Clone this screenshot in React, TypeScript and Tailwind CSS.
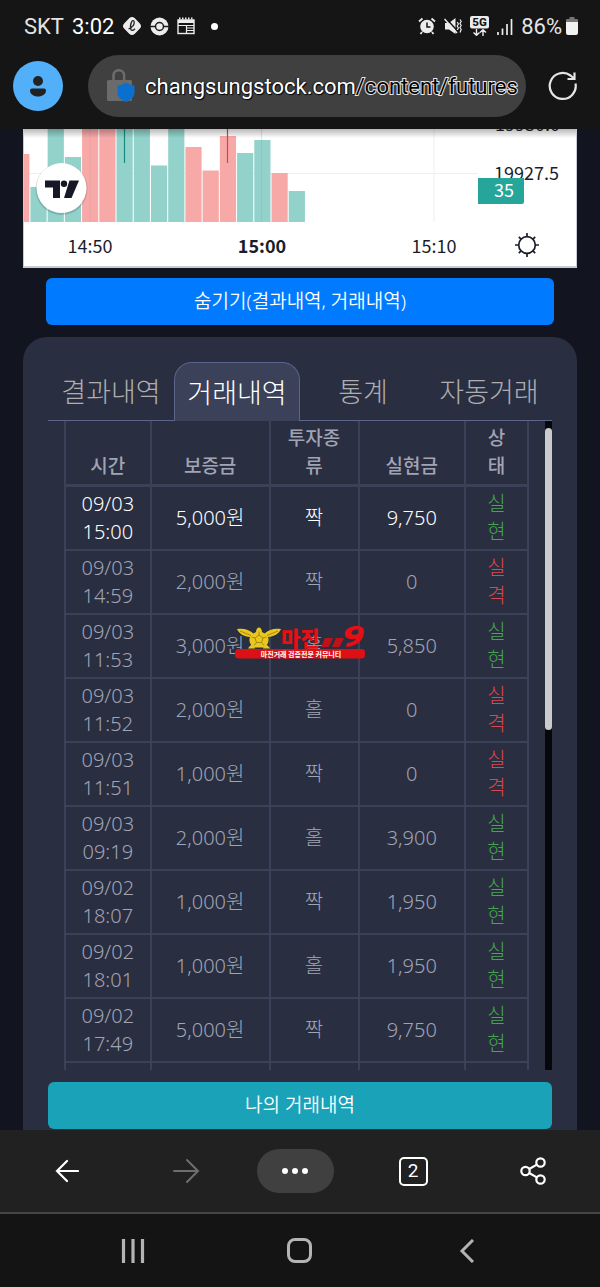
import { clsx } from 'clsx'
import type { ReactNode } from 'react'

type Trade = {
  date: string
  time: string
  deposit: string
  kind: '짝' | '홀'
  payout: string
}

const trades: Trade[] = [
  { date: '09/03', time: '15:00', deposit: '5,000원', kind: '짝', payout: '9,750' },
  { date: '09/03', time: '14:59', deposit: '2,000원', kind: '짝', payout: '0' },
  { date: '09/03', time: '11:53', deposit: '3,000원', kind: '홀', payout: '5,850' },
  { date: '09/03', time: '11:52', deposit: '2,000원', kind: '홀', payout: '0' },
  { date: '09/03', time: '11:51', deposit: '1,000원', kind: '짝', payout: '0' },
  { date: '09/03', time: '09:19', deposit: '2,000원', kind: '홀', payout: '3,900' },
  { date: '09/02', time: '18:07', deposit: '1,000원', kind: '짝', payout: '1,950' },
  { date: '09/02', time: '18:01', deposit: '1,000원', kind: '홀', payout: '1,950' },
  { date: '09/02', time: '17:49', deposit: '5,000원', kind: '짝', payout: '9,750' },
]

const tabs = ['결과내역', '거래내역', '통계', '자동거래']

// volume bars, top edge measured from the top of the chart
const bars = [
  { top: 25, up: false },
  { top: 58, up: true },
  { top: 0, up: true },
  { top: 28, up: true },
  { top: 0, up: false },
  { top: 0, up: false },
  { top: 0, up: true },
  { top: 0, up: true },
  { top: 36.5, up: true },
  { top: 0, up: true },
  { top: 18, up: false },
  { top: 41.5, up: false },
  { top: 7, up: false },
  { top: 24, up: true },
  { top: 11, up: true },
  { top: 44, up: false },
  { top: 62, up: true },
]

const StatusBar = () => (
  <div className="flex h-[52px] items-center justify-between pr-[22px] pl-6 text-[22px] text-[#e4e4e4]">
    <div className="flex items-center gap-2">
      <span>SKT</span>
      <span className="text-white">3:02</span>
      <svg className="h-5 w-5" viewBox="0 0 20 20">
        <rect x="2.6" y="2.6" width="14.8" height="14.8" rx="4" fill="#ececec" transform="rotate(45 10 10)" />
        <path
          d="M6.500 13c3.500-1.500 6-4.500 5.700-7-.2-1.700-2-1.900-2.700 0-.9 2.200-1.300 5.600-.6 7.400.6 1.600 2.400 1.200 4.100-.6"
          fill="none"
          stroke="#222"
          strokeWidth="1.300"
        />
      </svg>
      <svg className="h-[19px] w-[19px]" viewBox="0 0 19 19">
        <circle cx="9.500" cy="9.500" r="9" fill="#ececec" />
        <path d="M0 9.500H19" stroke="#1b1b1b" strokeWidth="1.500" />
        <circle cx="9.500" cy="9.500" r="4" fill="#ececec" stroke="#1b1b1b" strokeWidth="1.500" />
      </svg>
      <svg className="h-[18px] w-[18px]" viewBox="0 0 18 18" fill="none" stroke="#ececec">
        <rect x="1" y="3" width="16" height="13.500" strokeWidth="1.400" />
        <path d="M1 4.500H17" strokeWidth="3" />
        <path d="M2 1.500H17" strokeWidth="2" strokeDasharray="1.500 1.500" />
        <path d="M1 8.500H17M9.500 8.500V16M9.500 11H17M9.500 13.500H17" strokeWidth="1.200" />
      </svg>
      <span className="ml-2 h-[7px] w-[7px] rounded-full bg-white" />
    </div>

    <div className="flex items-center gap-2">
      <svg className="h-[18px] w-[18px]" viewBox="0 0 18 18">
        <path d="M1 4.500L4.500 1.500M17 4.500L13.500 1.500M4 15L2.500 17M14 15L15.500 17" stroke="#ececec" strokeWidth="1.800" />
        <circle cx="9" cy="9.500" r="6.800" fill="#ececec" />
        <path d="M9 5.500V10H12.500" fill="none" stroke="#151515" strokeWidth="1.500" />
      </svg>
      <svg className="h-[18px] w-[18px]" viewBox="0 0 18 18">
        <path d="M1 6H5L11.500 1V17L5 12.500H1Z" fill="#ececec" />
        <path d="M1.500 1L14.500 15" stroke="#151515" strokeWidth="1.600" />
        <path d="M.5 2L13 16" stroke="#ececec" strokeWidth="1.500" />
        <path d="M13.200 5l1.200 2-1.200 2 1.200 2-1.200 2M16 2.500l1.200 2L16 6.500l1.200 2-1.200 2 1.200 2-1.200 3" fill="none" stroke="#ececec" strokeWidth="1.200" />
      </svg>
      <svg className="h-5 w-[19px]" viewBox="0 0 19 20">
        <rect width="19" height="12.500" rx="2" fill="#ececec" />
        <text x="9.500" y="10.300" textAnchor="middle" fontSize="11.500" fontWeight="800" fill="#151515">
          5G
        </text>
        <path d="M6.500 13V19M3.500 16.500L6.500 19.300 9.500 16.500M13 20V14M10 16.500L13 13.700 16 16.500" fill="none" stroke="#ececec" strokeWidth="1.400" />
      </svg>
      <svg className="h-[17px] w-4" viewBox="0 0 16 17" stroke="#ececec" strokeWidth="1.700">
        <path d="M1 14V17M5.500 10.500V17M10 6V17M14.500 1V17" />
      </svg>
      <span>86%</span>
      <svg className="-ml-1 h-[18px] w-3" viewBox="0 0 12 18">
        <path d="M3.500 0h5v2H11a1 1 0 0 1 1 1v4H0V3a1 1 0 0 1 1-1h2.500Z" fill="#777" />
        <path d="M0 5H12V16a2 2 0 0 1-2 2H2a2 2 0 0 1-2-2Z" fill="#f2f2f2" />
      </svg>
    </div>
  </div>
)

const AddressBar = () => (
  <div className="flex items-center pr-[22px] pl-[13px]">
    <button aria-label="Profile" className="flex h-[50px] w-[50px] shrink-0 items-center justify-center rounded-full bg-[#52b0fb]">
      <svg className="h-[22px] w-[18px]" viewBox="0 0 18 22" fill="#222">
        <circle cx="9" cy="6" r="5" />
        <path d="M3 13.500H15a2 2 0 0 1 2 2c0 3.500-3.500 6-8 6s-8-2.500-8-6a2 2 0 0 1 2-2Z" />
      </svg>
    </button>
    <button
      aria-label="Address"
      className="mr-[22px] ml-[25px] flex h-[62px] min-w-0 flex-1 items-center overflow-hidden rounded-full bg-[#404040] pl-[18px]"
    >
      <svg className="h-[34px] w-[29px] shrink-0" viewBox="0 0 29 34">
        <path d="M7.500 12V6.500a5.300 5.300 0 0 1 10.600 0V12" fill="none" stroke="#6b6b6b" strokeWidth="2.600" />
        <rect x="1" y="11" width="25" height="21" rx="1.500" fill="#6b6b6b" />
        <path d="M20 13.500c2.500 1.800 5.500 2.800 8.500 3v7c0 4.500-3.500 7.500-8.500 9.500-5-2-8.500-5-8.500-9.500v-7c3-.2 6-1.200 8.500-3Z" fill="#0a6fce" />
      </svg>
      <span className="ml-[10px] text-[22px] whitespace-nowrap">
        <span className="text-white [text-shadow:1px_1px_1px_#000,-1px_0_1px_#111]">changsungstock.com</span>
        <span className="text-black [-webkit-text-stroke:2px_#e8e8e8] [paint-order:stroke_fill]">/content/futures</span>
      </span>
    </button>
    <button aria-label="Reload" className="shrink-0">
      <svg className="h-[30px] w-[30px]" viewBox="0 0 30 30" fill="none" stroke="#e6e6e6" strokeWidth="2.200">
        <path d="M27.500 12.500A13 13 0 1 1 22.500 4.500L26 7.500M26.500 1.500V8H19.500" />
      </svg>
    </button>
  </div>
)

const Chart = () => (
  <div className="relative mx-[23px] border-x border-b-2 border-[#c9cbd4] bg-white">
    <svg className="block w-full" viewBox="24 0 552 137" fontFamily="'Noto Sans CJK KR', sans-serif" fontSize="18" fill="#1b1e2a">
      <defs>
        <linearGradient id="shade" x1="0" y1="0" x2="0" y2="1">
          <stop offset="0" stopColor="#000" stopOpacity=".28" />
          <stop offset="1" stopColor="#000" stopOpacity="0" />
        </linearGradient>
      </defs>
      <path d="M24 44.500H478M90 0V93M261.500 0V93M434 0V93" stroke="#eeeff1" />
      {bars.map((bar, i) => (
        <rect
          key={i}
          x={13.2 + i * 17.22}
          y={bar.top}
          width="16.2"
          height={93 - bar.top}
          fill={bar.up ? '#92d2cb' : '#f7a9a8'}
        />
      ))}
      <path d="M90 0V93M261.500 0V93" stroke="#000" strokeOpacity=".05" />
      <path d="M124.500 0V34" stroke="#168c80" strokeWidth="1.200" />
      <path d="M227.500 0V34" stroke="#dc3f48" strokeWidth="1.200" />

      <circle cx="61.500" cy="60" r="26" fill="#000" opacity=".15" />
      <circle cx="61.500" cy="59" r="25" fill="#fff" />
      <g fill="#161925">
        <path d="M45 51.500H60V69H53V58.500H45Z" />
        <circle cx="64" cy="54.700" r="3.200" />
        <path d="M69.500 51.500H79L71.500 69H64Z" />
      </g>

      <text x="495" y="2">19930.0</text>
      <text x="494" y="51">19927.5</text>
      <path d="M478 49H524V73a2 2 0 0 1-2 2H478Z" fill="#26a69a" />
      <text x="494" y="68" fill="#fff">35</text>
      <text x="90" y="124" textAnchor="middle">14:50</text>
      <text x="262" y="124" textAnchor="middle" fontWeight="700">15:00</text>
      <text x="434" y="124" textAnchor="middle">15:10</text>
      <rect x="24" width="552" height="9" fill="url(#shade)" />
    </svg>
    <button aria-label="Chart settings" className="absolute right-[37px] bottom-[9px]">
      <svg className="h-6 w-6" viewBox="0 0 24 24" fill="none" stroke="#1b1e2a" strokeWidth="1.700">
        <circle cx="12" cy="12" r="8.300" />
        <path d="M12 0V4M12 20V24M0 12H4M20 12H24M3.800 3.800L6.300 6.300M17.700 17.700L20.200 20.200M3.800 20.200L6.300 17.700M17.700 6.300L20.200 3.800" />
      </svg>
    </button>
  </div>
)

const Th = ({ children }: { children: ReactNode }) => (
  <th className="border-x-2 border-b-[3px] border-[#3b4159] px-4 pt-[3px] pb-1 align-bottom text-[19px] font-medium break-all">
    {children}
  </th>
)

const Td = ({ children, className }: { children?: ReactNode; className?: string }) => (
  <td className={clsx('border-2 border-[#3b4159] px-3 py-[3px]', className)}>{children}</td>
)

const TradeTable = () => (
  <table className="w-full table-fixed border-collapse text-center text-[20px] leading-7 font-light text-[#a0a4b4]">
    <colgroup>
      <col className="w-[18.5%]" />
      <col className="w-[25.7%]" />
      <col className="w-[19.2%]" />
      <col className="w-[23%]" />
      <col className="w-[13.6%]" />
    </colgroup>
    <thead>
      <tr>
        <Th>시간</Th>
        <Th>보증금</Th>
        <Th>투자종류</Th>
        <Th>실현금</Th>
        <Th>상<br />태</Th>
      </tr>
    </thead>
    <tbody>
      {trades.map((trade, i) => {
        const won = trade.payout !== '0'
        return (
          <tr key={trade.date + trade.time} className={clsx(i === 0 && 'text-white')}>
            <Td>
              {trade.date}
              <br />
              {trade.time}
            </Td>
            <Td>{trade.deposit}</Td>
            <Td>{trade.kind}</Td>
            <Td>{trade.payout}</Td>
            <Td className={won ? 'text-[#43a84c]' : 'text-[#d9484b]'}>
              실
              <br />
              {won ? '현' : '격'}
            </Td>
          </tr>
        )
      })}
      {/* cut edge of the next row */}
      <tr aria-hidden="true">
        {[0, 1, 2, 3, 4].map((cell) => (
          <td key={cell} className="h-2 border-x-2 border-[#3b4159]" />
        ))}
      </tr>
    </tbody>
  </table>
)

const Watermark = () => (
  <div className="pointer-events-none absolute top-[205px] left-1/2 w-[130px] -translate-x-1/2">
    <svg className="block w-full" viewBox="0 0 130 34" fontFamily="'Noto Sans CJK KR', sans-serif">
      <g fill="#e9c71d">
        <path d="M2 3c6-1 12 0 16.500 4.500L21 6c0-2.500 1.500-4.500 3-4.500S27 3.500 27 6l2.500 1.500C34 3 40 2 46 3c-2 5-7 7.500-13 8 1.500 4 0 8-4 10.500h-10c-4-2.500-5.500-6.500-4-10.500C9 10.500 4 8 2 3Z" />
        <path d="M14 21l4-4 2 5.500h-7ZM34 21l-4-4-2 5.500h7Z" />
      </g>
      <g fill="none" stroke="#8a7010" strokeWidth=".7">
        <path d="M24 9l4 3-1.500 4.500h-5L20 12ZM24 9V5.500M28 12l3.500-1M26.500 16.500l2.500 3M21.500 16.500l-2.500 3M20 12l-3.500-1M5 5l11 4.500M43 5L32 9.500" />
      </g>
      <text x="46" y="20" fontSize="21" fontWeight="900" fill="#e60f13">마진</text>
      <path d="M90 12h8l-4.500 9h-7.500ZM101 12h8l-4.500 9h-7.500Z" fill="#bd1218" />
      <path
        d="M129 5c0 9-6 15-18 16l1-4c5-.5 8-2 9-4.200-7 1.200-12-.8-11-6.300 1-4 6-6.500 12-6.500 4.500 0 7 1.500 7 5ZM121.500 3.500c-3 0-5 1.500-5 3.200s2 2.300 3.800 2C122.500 8.300 124 6.800 124 5.200 124 4.200 123 3.500 121.500 3.500Z"
        fill="#e60f13"
        fillRule="evenodd"
      />
      <rect x="0" y="23" width="130" height="9.500" rx="3.500" fill="#dd1015" />
      <text x="66" y="30.500" textAnchor="middle" fontSize="7" fontWeight="700" fill="#fff">
        마진거래 검증전문 커뮤니티
      </text>
    </svg>
  </div>
)

const TradePanel = () => (
  <section className="mx-[23px] mt-3 rounded-t-3xl bg-[#2a2e41] px-[25px] pt-[25px] pb-px">
    <div role="tablist" className="grid grid-cols-4 text-[27px] font-light">
      {tabs.map((tab) => {
        const active = tab === '거래내역'
        return (
          <button
            key={tab}
            role="tab"
            aria-selected={active}
            className={clsx(
              'flex h-[59px] items-center justify-center border-[#5c658a] pt-[2px] whitespace-nowrap',
              active ? 'rounded-t-[18px] border border-b-0 bg-[#3b4159] text-white' : 'border-b text-[#aeaeb0]',
            )}
          >
            {tab}
          </button>
        )
      })}
    </div>

    <div className="relative flex">
      <div className="min-w-0 flex-1 pr-4 pl-4">
        <TradeTable />
      </div>
      <div className="w-[7px] bg-[#06080c] pt-[7px]">
        <div className="h-[47%] rounded-full bg-[#cbcbcb]" />
      </div>
      <Watermark />
    </div>

    <button className="mt-3 h-[47px] w-full rounded-md bg-[#19a2b8] text-[19px] font-[350] text-white">나의 거래내역</button>
  </section>
)

const BrowserNav = () => (
  <nav className="grid h-[84px] grid-cols-[134fr_104fr_114fr_122fr_118fr] items-center justify-items-center border-b-2 border-[#444] bg-[#212121] pr-2">
    <button aria-label="Back">
      <svg className="h-6 w-6" viewBox="0 0 24 24" fill="none" stroke="#fff" strokeWidth="2.200" strokeLinecap="round">
        <path d="M23 12H2M12 2L2 12 12 22" />
      </svg>
    </button>
    <button aria-label="Forward">
      <svg className="h-7 w-7" viewBox="0 0 28 28" fill="none" stroke="#6e6e6e" strokeWidth="2" strokeLinecap="round">
        <path d="M2 14H26M15 3L26 14 15 25" />
      </svg>
    </button>
    <button aria-label="More" className="flex h-11 w-[77px] items-center justify-center gap-1 rounded-full bg-[#404040]">
      <span className="h-[6px] w-[6px] rounded-full bg-white" />
      <span className="h-[6px] w-[6px] rounded-full bg-white" />
      <span className="h-[6px] w-[6px] rounded-full bg-white" />
    </button>
    <button className="flex h-[29px] w-[29px] items-center justify-center rounded-[5px] border-2 border-white text-[19px] text-white">2</button>
    <button aria-label="Share">
      <svg className="h-7 w-[26px]" viewBox="0 0 26 28" fill="none" stroke="#fff" strokeWidth="2.200">
        <circle cx="5.500" cy="14" r="4.200" />
        <circle cx="20.500" cy="5.500" r="4.200" />
        <circle cx="20.500" cy="22.500" r="4.200" />
        <path d="M9.200 12L16.800 7.600M9.200 16L16.800 20.400" />
      </svg>
    </button>
  </nav>
)

const SystemNav = () => (
  <nav className="grid h-[73px] grid-cols-3 items-center justify-items-center bg-[#141414] px-[50px]">
    <button aria-label="Recent apps">
      <svg className="h-6 w-6" viewBox="0 0 24 24" stroke="#b4b4b4" strokeWidth="3.200">
        <path d="M2.500 0V24M12 0V24M21.500 0V24" />
      </svg>
    </button>
    <button aria-label="Home" className="h-[25px] w-[25px] rounded-[8px] border-[3px] border-[#b4b4b4]" />
    <button aria-label="Go back">
      <svg className="h-6 w-[15px]" viewBox="0 0 15 24" fill="none" stroke="#b4b4b4" strokeWidth="3">
        <path d="M14 1L3 12 14 23" />
      </svg>
    </button>
  </nav>
)

export default function App() {
  return (
    <div className="flex min-h-screen flex-col overflow-hidden bg-[#12141f] font-['Noto_Sans','Noto_Sans_CJK_KR',sans-serif]">
      <header className="bg-[#151515] pb-3 font-['Roboto',sans-serif]">
        <StatusBar />
        <div className="pt-[3px]">
          <AddressBar />
        </div>
      </header>
      <main className="flex-1">
        <Chart />
        <div className="mt-[10px] px-[46px]">
          <button className="h-[47px] w-full rounded-md bg-[#007bff] text-[19px] font-[350] text-white">숨기기(결과내역, 거래내역)</button>
        </div>
        <TradePanel />
      </main>
      <footer className="font-['Roboto',sans-serif]">
        <BrowserNav />
        <SystemNav />
      </footer>
    </div>
  )
}
